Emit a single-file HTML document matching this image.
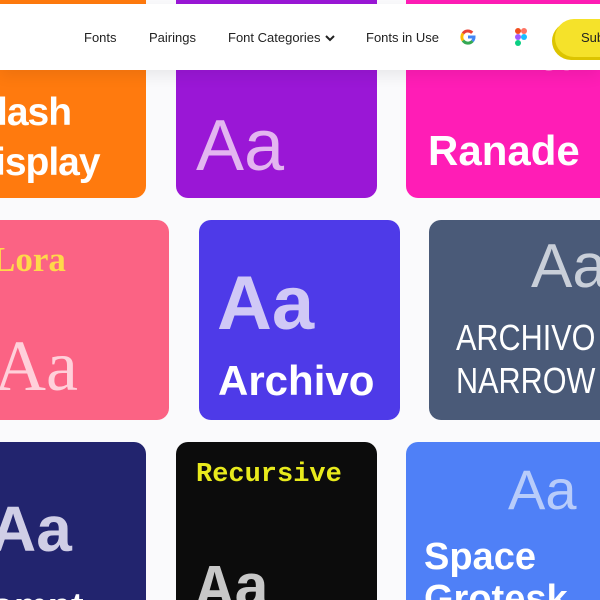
<!DOCTYPE html>
<html><head><style>
html,body{margin:0;width:600px;height:600px;overflow:hidden}
body{background:#fafafc;font-family:"Liberation Sans",sans-serif;position:relative}
#w{position:absolute;left:0;top:0;width:600px;height:600px;overflow:hidden}
.c{position:absolute;overflow:hidden}
.t{position:absolute;white-space:nowrap;line-height:1}
</style></head><body><div id="w">
<div class="c" style="left:0;top:0;width:146px;height:198px;background:#ff7a0e;border-radius:0 0 12px 0">
<div class="t" style="left:-3px;top:93px;font-size:39px;font-weight:bold;color:#fff;letter-spacing:-1px">lash</div>
<div class="t" style="left:-5px;top:143px;font-size:39px;font-weight:bold;color:#fff;letter-spacing:-1px">isplay</div></div>
<div class="c" style="left:176px;top:0;width:201px;height:198px;background:#9a17d6;border-radius:0 0 12px 12px">
<div class="t" style="left:20px;top:110px;font-size:72px;color:#e3b5f0">Aa</div></div>
<div class="c" style="left:406px;top:0;width:194px;height:198px;background:#ff1db6;border-radius:0 0 0 12px">
<div class="t" style="left:88px;top:20px;font-size:60px;font-weight:bold;color:#ffc8ec">Aa</div>
<div class="t" style="left:22px;top:130px;font-size:42px;font-weight:bold;color:#fff">Ranade</div></div>

<div class="c" style="left:0;top:220px;width:169px;height:200px;background:#fb6384;border-radius:0 12px 12px 0">
<div class="t" style="left:-8px;top:22px;font-size:35px;font-weight:bold;font-family:'Liberation Serif',serif;color:#ffd84a">Lora</div>
<div class="t" style="left:-6px;top:110px;font-size:72px;font-family:'Liberation Serif',serif;color:#ffd0da">Aa</div></div>
<div class="c" style="left:199px;top:220px;width:201px;height:200px;background:#4e3ae8;border-radius:12px">
<div class="t" style="left:18px;top:46px;font-size:76px;font-weight:bold;color:#d0c8f6">Aa</div>
<div class="t" style="left:19px;top:140px;font-size:42px;font-weight:bold;color:#fff">Archivo</div></div>
<div class="c" style="left:429px;top:220px;width:171px;height:200px;background:#4a5a78;border-radius:12px 0 0 12px">
<div class="t" style="left:102px;top:16px;font-size:62px;color:#c9cfd9">Aa</div>
<div class="t" style="left:27px;top:100px;font-size:36px;color:#fff;transform:scaleX(.85);transform-origin:left">ARCHIVO</div>
<div class="t" style="left:27px;top:143px;font-size:36px;color:#fff;transform:scaleX(.85);transform-origin:left">NARROW</div></div>

<div class="c" style="left:0;top:442px;width:146px;height:158px;background:#22246e;border-radius:0 12px 0 0">
<div class="t" style="left:-10px;top:55px;font-size:64px;font-weight:bold;color:#d0cee6">Aa</div>
<div class="t" style="left:-24px;top:146px;font-size:38px;font-weight:bold;color:#fff">rompt</div></div>
<div class="c" style="left:176px;top:442px;width:201px;height:158px;background:#0c0c0c;border-radius:12px 12px 0 0">
<div class="t" style="left:20px;top:20px;font-size:27px;font-weight:bold;font-family:'Liberation Mono',monospace;color:#e8ea1c">Recursive</div>
<div class="t" style="left:20px;top:118px;font-size:62px;font-weight:bold;font-family:'Liberation Mono',monospace;color:#c8c8c8">Aa</div></div>
<div class="c" style="left:406px;top:442px;width:194px;height:158px;background:#4f80f7;border-radius:12px 0 0 0">
<div class="t" style="left:102px;top:20px;font-size:56px;color:#b8ccfa">Aa</div>
<div class="t" style="left:18px;top:96px;font-size:38px;font-weight:bold;color:#fff">Space</div>
<div class="t" style="left:18px;top:138px;font-size:38px;font-weight:bold;color:#fff">Grotesk</div></div>

<div style="position:absolute;left:0;top:4px;width:600px;height:66px;background:#fff;box-shadow:0 6px 14px rgba(0,0,0,.07);overflow:hidden">
<div class="t" style="left:84px;top:27px;font-size:13px;color:#222">Fonts</div>
<div class="t" style="left:149px;top:27px;font-size:13px;color:#222">Pairings</div>
<div class="t" style="left:228px;top:27px;font-size:13px;color:#222">Font Categories</div>
<svg style="position:absolute;left:325px;top:30px" width="10" height="8"><path d="M1 2l4 4 4-4" stroke="#222" stroke-width="2" fill="none"/></svg>
<div class="t" style="left:366px;top:27px;font-size:13px;color:#222">Fonts in Use</div>
<svg style="position:absolute;left:459px;top:24px" width="18" height="18" viewBox="0 0 18 18" fill="none" stroke-width="3">
<path d="M13.2 4.8A6 6 0 0 0 4 5.5" stroke="#ea4335"/>
<path d="M4 5.5A6 6 0 0 0 4 12.5" stroke="#fbbc05"/>
<path d="M4 12.5A6 6 0 0 0 13.5 13" stroke="#34a853"/>
<path d="M13.5 13A6 6 0 0 0 15 9H9" stroke="#4285f4"/></svg>
<svg style="position:absolute;left:515px;top:24px" width="12" height="18"><circle cx="3" cy="3" r="3" fill="#f24e1e"/><circle cx="9" cy="3" r="3" fill="#ff7262"/><circle cx="3" cy="9" r="3" fill="#a259ff"/><circle cx="9" cy="9" r="3" fill="#1abcfe"/><circle cx="3" cy="15" r="3" fill="#0acf83"/></svg>
<div style="position:absolute;left:555px;top:15px;width:60px;height:38px;border-radius:19px 0 0 19px;background:#f5e22a;box-shadow:-3px 3px 0 #dcc400"></div>
<div class="t" style="left:581px;top:27px;font-size:13px;color:#222">Sub</div>
</div>
</div></body></html>
